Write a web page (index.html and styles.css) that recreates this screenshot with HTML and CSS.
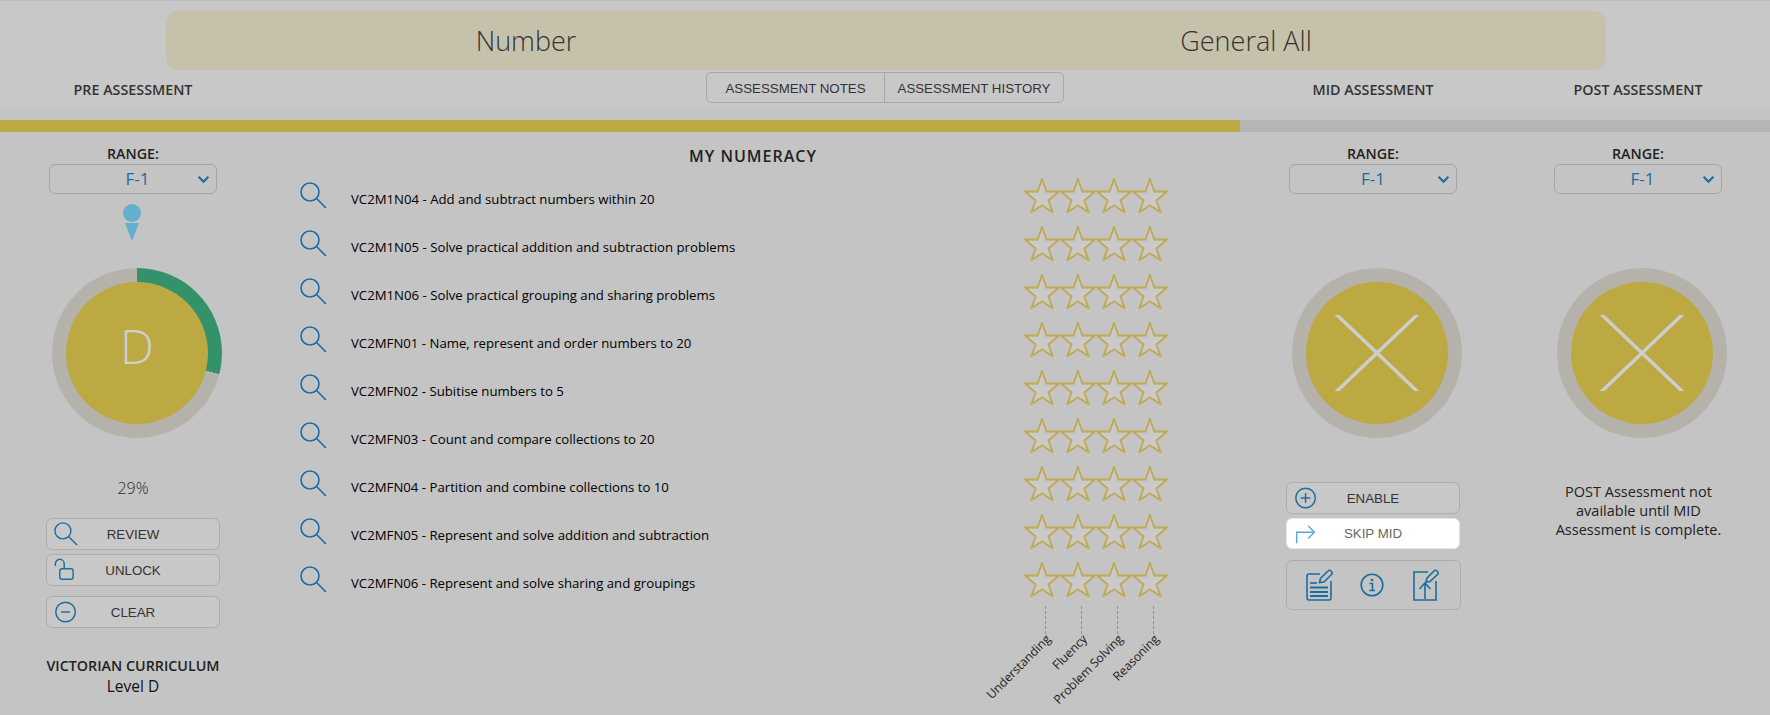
FILE: index.html
```html
<!DOCTYPE html>
<html lang="en">
<head>
  <meta charset="UTF-8" />
  <meta name="viewport" content="width=device-width, initial-scale=1" />
  <title>Assessment</title>
  <link rel="stylesheet" href="styles.css">
</head>
<body>
  <svg class="defs" width="0" height="0">
    <symbol id="star" viewBox="0 0 36 35">
      <polygon points="18,1 22.5,13.5 35,13.5 24.5,22.5 28.5,34 18,27.5 7.5,34 11.5,22.5 1,13.5 13.5,13.5" />
    </symbol>
    <symbol id="search" viewBox="0 0 27 27">
      <circle cx="10" cy="10" r="9" />
      <line x1="16.5" y1="16.5" x2="26" y2="26" />
    </symbol>
    <symbol id="chevron" viewBox="0 0 12 8">
      <polyline points="1.5,1.5 6,6 10.5,1.5" />
    </symbol>
    <symbol id="cross" viewBox="0 0 86 76">
      <line x1="2" y1="-1" x2="84" y2="77" />
      <line x1="84" y1="-1" x2="2" y2="77" />
    </symbol>
  </svg>

  <header class="top">
    <div class="banner">
      <div>Number</div>
      <div>General All</div>
    </div>
    <div class="columns">
      <h2 class="stage">PRE ASSESSMENT</h2>
      <div class="tabs">
        <button class="tab">ASSESSMENT NOTES</button>
        <button class="tab">ASSESSMENT HISTORY</button>
      </div>
      <h2 class="stage">MID ASSESSMENT</h2>
      <h2 class="stage">POST ASSESSMENT</h2>
    </div>
  </header>

  <div class="progress"><div class="progress-fill"></div></div>

  <main class="columns">
    <!-- pre -->
    <section class="side">
      <div class="range-label">RANGE:</div>
      <div class="range range-shift">F-1 <svg class="chevron"><use href="#chevron"/></svg></div>
      <div class="pin-slot">
        <div class="pin-dot"></div>
        <div class="pin-tip"></div>
      </div>
      <div class="ring ring-pre"><div class="disc"><span class="grade">D</span></div></div>
      <div class="percent">29%</div>
      <div class="actions">
        <button class="action">
          <svg class="action-icon line" viewBox="0 0 27 27"><use href="#search"/></svg>REVIEW
        </button>
        <button class="action">
          <svg class="action-icon line" viewBox="0 0 27 27">
            <rect x="6.5" y="12" width="15" height="12" rx="2.5" />
            <path d="M1.5 9V6.5a5 5 0 0 1 10 0V12" />
          </svg>UNLOCK
        </button>
        <button class="action action-gap">
          <svg class="action-icon line" viewBox="0 0 27 27">
            <circle cx="13" cy="13.5" r="11" />
            <line x1="8" y1="13.5" x2="18" y2="13.5" />
          </svg>CLEAR
        </button>
      </div>
      <div class="curriculum">VICTORIAN CURRICULUM</div>
      <div class="level">Level D</div>
    </section>

    <!-- outcomes -->
    <section class="outcomes">
      <h1 class="outcomes-title">MY NUMERACY</h1>

      <div class="outcome">
        <svg class="outcome-icon line"><use href="#search"/></svg>
        <span class="outcome-text">VC2M1N04 - Add and subtract numbers within 20</span>
        <div class="stars"><svg><use href="#star"/></svg><svg><use href="#star"/></svg><svg><use href="#star"/></svg><svg><use href="#star"/></svg></div>
      </div>
      <div class="outcome">
        <svg class="outcome-icon line"><use href="#search"/></svg>
        <span class="outcome-text">VC2M1N05 - Solve practical addition and subtraction problems</span>
        <div class="stars"><svg><use href="#star"/></svg><svg><use href="#star"/></svg><svg><use href="#star"/></svg><svg><use href="#star"/></svg></div>
      </div>
      <div class="outcome">
        <svg class="outcome-icon line"><use href="#search"/></svg>
        <span class="outcome-text">VC2M1N06 - Solve practical grouping and sharing problems</span>
        <div class="stars"><svg><use href="#star"/></svg><svg><use href="#star"/></svg><svg><use href="#star"/></svg><svg><use href="#star"/></svg></div>
      </div>
      <div class="outcome">
        <svg class="outcome-icon line"><use href="#search"/></svg>
        <span class="outcome-text">VC2MFN01 - Name, represent and order numbers to 20</span>
        <div class="stars"><svg><use href="#star"/></svg><svg><use href="#star"/></svg><svg><use href="#star"/></svg><svg><use href="#star"/></svg></div>
      </div>
      <div class="outcome">
        <svg class="outcome-icon line"><use href="#search"/></svg>
        <span class="outcome-text">VC2MFN02 - Subitise numbers to 5</span>
        <div class="stars"><svg><use href="#star"/></svg><svg><use href="#star"/></svg><svg><use href="#star"/></svg><svg><use href="#star"/></svg></div>
      </div>
      <div class="outcome">
        <svg class="outcome-icon line"><use href="#search"/></svg>
        <span class="outcome-text">VC2MFN03 - Count and compare collections to 20</span>
        <div class="stars"><svg><use href="#star"/></svg><svg><use href="#star"/></svg><svg><use href="#star"/></svg><svg><use href="#star"/></svg></div>
      </div>
      <div class="outcome">
        <svg class="outcome-icon line"><use href="#search"/></svg>
        <span class="outcome-text">VC2MFN04 - Partition and combine collections to 10</span>
        <div class="stars"><svg><use href="#star"/></svg><svg><use href="#star"/></svg><svg><use href="#star"/></svg><svg><use href="#star"/></svg></div>
      </div>
      <div class="outcome">
        <svg class="outcome-icon line"><use href="#search"/></svg>
        <span class="outcome-text">VC2MFN05 - Represent and solve addition and subtraction</span>
        <div class="stars"><svg><use href="#star"/></svg><svg><use href="#star"/></svg><svg><use href="#star"/></svg><svg><use href="#star"/></svg></div>
      </div>
      <div class="outcome">
        <svg class="outcome-icon line"><use href="#search"/></svg>
        <span class="outcome-text">VC2MFN06 - Represent and solve sharing and groupings</span>
        <div class="stars"><svg><use href="#star"/></svg><svg><use href="#star"/></svg><svg><use href="#star"/></svg><svg><use href="#star"/></svg></div>
      </div>

      <div class="legend">
        <div class="legend-item"><span class="legend-label">Understanding</span></div>
        <div class="legend-item"><span class="legend-label">Fluency</span></div>
        <div class="legend-item"><span class="legend-label">Problem Solving</span></div>
        <div class="legend-item"><span class="legend-label">Reasoning</span></div>
      </div>
    </section>

    <!-- mid -->
    <section class="side">
      <div class="range-label">RANGE:</div>
      <div class="range">F-1 <svg class="chevron"><use href="#chevron"/></svg></div>
      <div class="pin-slot"></div>
      <div class="ring"><div class="disc"><svg class="cross"><use href="#cross"/></svg></div></div>
      <div class="mid-actions">
        <button class="action">
          <svg class="action-icon line" viewBox="0 0 27 27">
            <circle cx="13" cy="13.5" r="11" />
            <line x1="7.5" y1="13.5" x2="18.5" y2="13.5" />
            <line x1="13" y1="8" x2="13" y2="19" />
          </svg>ENABLE
        </button>
        <button class="action action-skip">
          <svg class="action-icon line-light" viewBox="0 0 27 27">
            <path d="M3 24V11.5H22" />
            <polyline points="16,4.5 23,11.5 16,18.5" />
          </svg>SKIP MID
        </button>
      </div>
      <div class="tool-panel">
        <svg class="tool line" viewBox="0 0 27 32">
          <path d="M14 5H3a2 2 0 0 0-2 2v22a2 2 0 0 0 2 2h20a2 2 0 0 0 2-2V12" />
          <line x1="4" y1="14" x2="11" y2="14" />
          <line x1="4" y1="18.5" x2="22" y2="18.5" stroke-width="2" />
          <line x1="4" y1="23" x2="22" y2="23" stroke-width="2" />
          <line x1="4" y1="27" x2="22" y2="27" stroke-width="2" />
          <path d="M13.5 13.5l1-4L22 2a2 2 0 0 1 3 0l.5.5a2 2 0 0 1 0 3L18 13z" />
        </svg>
        <svg class="tool-info line" viewBox="0 0 24 24">
          <circle cx="12" cy="12" r="10.8" />
          <circle class="dot" cx="12" cy="7" r="1.3" />
          <path d="M9.5 10.5H12.5V17.5M9.3 17.5H15" />
        </svg>
        <svg class="tool line" viewBox="0 0 27 32">
          <path d="M16 3H2v28h22V12" />
          <path d="M13 30V15M7.5 20l5.5-6 5.5 6" />
          <path d="M14 13l1-4L22 2a2 2 0 0 1 3 0l.5.5a2 2 0 0 1 0 3L18 12.5z" />
        </svg>
      </div>
    </section>

    <!-- post -->
    <section class="side">
      <div class="range-label">RANGE:</div>
      <div class="range range-shift">F-1 <svg class="chevron"><use href="#chevron"/></svg></div>
      <div class="pin-slot"></div>
      <div class="ring"><div class="disc"><svg class="cross"><use href="#cross"/></svg></div></div>
      <p class="post-note">POST Assessment not<br>available until MID<br>Assessment is complete.</p>
    </section>
  </main>
</body>
</html>
```

FILE: styles.css
```css
* {
  box-sizing: border-box;
}

html, body {
  height: 100%;
}

body {
  margin: 0;
  background-color: #c4c4c4;
  color: #222;
  font-family: 'Open Sans', sans-serif;
  overflow: hidden;
}

.defs {
  display: block;
  height: 0;
}

.line {
  fill: none;
  stroke: #1c6c9f;
  stroke-width: 1.6;
}

.line-light {
  fill: none;
  stroke: #5aa8d8;
  stroke-width: 1.6;
}

/* header */
.top {
  height: 108px;
  padding-top: 11px;
  background-color: #c8c8c8;
  border-top: 1px solid #bdbdbd;
}

.banner {
  display: grid;
  grid-template-columns: 1fr 1fr;
  height: 59px;
  margin: -1px 164px 0 166px;
  background-color: #c6c1ab;
  border-radius: 12px;
  font-size: 27px;
  font-weight: 300;
  line-height: 59px;
  text-align: center;
  color: #333;
}

.columns {
  display: grid;
  grid-template-columns: 266px 974px 266px 264px;
}

.stage {
  margin: 0;
  padding-top: 11px;
  font-size: 14.3px;
  font-weight: 600;
  line-height: 18px;
  text-align: center;
  color: #333;
}

.tabs {
  display: flex;
  width: 358px;
  height: 31px;
  margin: 2px 0 0 440px;
  border: 1px solid #a9a9a9;
  border-radius: 5px;
}

.tab {
  flex: 0 0 177px;
  padding: 2px 0 0;
  border: none;
  background: none;
  font-family: 'Liberation Sans', sans-serif;
  font-size: 13.3px;
  color: #333;
}

.tab + .tab {
  flex: 1;
  border-left: 1px solid #a9a9a9;
}

.progress {
  height: 12px;
  margin-top: 12px;
  background-color: #b5b5b5;
}

.progress-fill {
  width: 1240px;
  height: 100%;
  background-color: #bda941;
}

/* side columns */
.side {
  display: flex;
  flex-direction: column;
  align-items: center;
}

.range-label {
  margin-top: 13px;
  font-size: 14.3px;
  font-weight: 600;
  line-height: 18px;
  color: #222;
}

.range {
  position: relative;
  width: 168px;
  height: 30px;
  margin-top: 1px;
  border: 1px solid #a6a6a6;
  border-radius: 6px;
  font-size: 17px;
  line-height: 28px;
  text-align: center;
  color: #1c6c9f;
}

.range-shift {
  padding-left: 9px;
}

.chevron {
  position: absolute;
  top: 10px;
  right: 6px;
  width: 13px;
  height: 9px;
  fill: none;
  stroke: #1c6c9f;
  stroke-width: 2;
}

.pin-slot {
  display: flex;
  flex-direction: column;
  align-items: center;
  height: 74px;
  padding: 10px 2px 0 0;
}

.pin-dot {
  width: 18px;
  height: 18px;
  border-radius: 50%;
  background-color: #64afd0;
}

.pin-tip {
  width: 0;
  height: 0;
  margin-top: 1px;
  border-left: 7px solid transparent;
  border-right: 7px solid transparent;
  border-top: 18px solid #64afd0;
}

.ring {
  display: flex;
  align-items: center;
  justify-content: center;
  width: 170px;
  height: 170px;
  margin-left: 8px;
  border-radius: 50%;
  background-color: #b5b2ac;
}

.ring-pre {
  background: conic-gradient(#33926a 0 29%, #b5b2ac 0);
}

.disc {
  display: flex;
  align-items: center;
  justify-content: center;
  width: 142px;
  height: 142px;
  border-radius: 50%;
  background-color: #bda941;
}

.grade {
  margin-top: -15px;
  font-size: 48px;
  font-weight: 300;
  line-height: 1;
  color: #cfcfcf;
}

.cross {
  width: 86px;
  height: 76px;
  stroke: #cdcdcd;
  stroke-width: 3.5;
}

.percent {
  margin-top: 39px;
  font-size: 16px;
  font-weight: 300;
  line-height: 22px;
  color: #2a2a2a;
}

.actions {
  display: flex;
  flex-direction: column;
  margin-top: 19px;
}

.action {
  display: flex;
  align-items: center;
  position: relative;
  justify-content: center;
  width: 174px;
  height: 32px;
  padding: 0;
  border: 1px solid #adadad;
  border-radius: 6px;
  background-color: #c8c8c8;
  font-family: 'Liberation Sans', sans-serif;
  font-size: 13.3px;
  color: #333;
}

.action + .action {
  margin-top: 4px;
}

.action + .action-gap {
  margin-top: 10px;
}

.action-icon {
  position: absolute;
  top: 3px;
  left: 7px;
  width: 24px;
  height: 24px;
}

.curriculum {
  margin-top: 29px;
  font-size: 14.3px;
  font-weight: 600;
  line-height: 18px;
}

.level {
  font-size: 15.5px;
  line-height: 22px;
  color: #111;
}

.mid-actions {
  display: flex;
  flex-direction: column;
  margin-top: 44px;
}

.action-skip {
  height: 31px;
  background-color: #fff;
  border-color: #e4e4e4;
  color: #666;
}

.tool-panel {
  display: flex;
  align-items: center;
  justify-content: space-between;
  width: 175px;
  height: 50px;
  margin-top: 11px;
  padding: 0 21px 0 19px;
  border: 1px solid #adadad;
  border-radius: 6px;
}

.tool {
  width: 27px;
  height: 32px;
}

.tool-info {
  width: 24px;
  height: 24px;
}

.tool-info .dot {
  fill: #1c6c9f;
  stroke: none;
}

.post-note {
  margin: 44px 0 0 1px;
  font-size: 14.5px;
  line-height: 19px;
  text-align: center;
  color: #222;
}

/* outcomes list */
.outcomes-title {
  margin: 0;
  padding-top: 14px;
  height: 39px;
  font-size: 16px;
  font-weight: 600;
  line-height: 20px;
  letter-spacing: 1px;
  text-align: center;
  color: #222;
}

.outcome {
  display: flex;
  align-items: center;
  height: 48px;
  padding: 0 72px 0 34px;
}

.outcome-icon {
  flex: none;
  width: 27px;
  height: 27px;
  margin-right: 24px;
}

.outcome-text {
  flex: 1;
  padding-top: 7px;
  font-size: 13.2px;
  color: #000;
}

.stars {
  display: flex;
  flex: none;
}

.stars svg {
  width: 36px;
  height: 35px;
  fill: #c9c9c9;
  stroke: #bfa94d;
  stroke-width: 1.8;
}

.legend {
  display: flex;
  width: 144px;
  margin: 3px 0 0 758px;
}

.legend-item {
  position: relative;
  width: 36px;
  height: 33px;
}

.legend-item::before {
  content: "";
  display: block;
  width: 0;
  height: 33px;
  margin-left: 21px;
  border-left: 1px dashed #8d8d8d;
}

.legend-label {
  position: absolute;
  top: 22px;
  right: 11px;
  font-size: 12.2px;
  line-height: 18px;
  white-space: nowrap;
  color: #222;
  transform: rotate(-45deg);
  transform-origin: right center;
}
```
